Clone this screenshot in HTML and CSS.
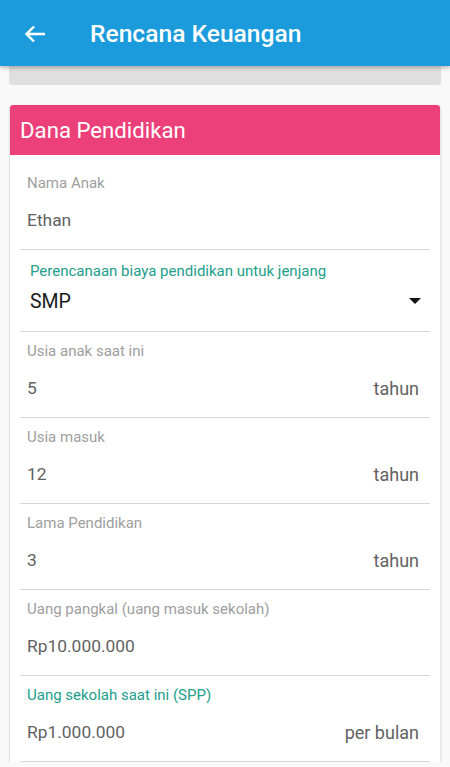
FILE: index.html
```html
<!DOCTYPE html>
<html lang="id">
<head>
    <meta charset="UTF-8">
    <meta name="viewport" content="width=device-width, initial-scale=1.0">
    <title>Rencana Keuangan</title>
    <link rel="stylesheet" href="styles.css">
</head>
<body>

<div class="app-bar">
    <span class="back-btn">
        <svg width="22" height="18" viewBox="0 0 22 18"><path d="M21 9H3M10 1.5L2.5 9 10 16.5" fill="none" stroke="#fff" stroke-width="2.4"/></svg>
    </span>
    <h1>Rencana Keuangan</h1>
</div>

<div class="top-strip"></div>

<div class="card">
    <div class="card-head">Dana Pendidikan</div>
    <div class="card-body">

        <!-- nama anak -->
        <div class="field first">
            <div class="label">Nama Anak</div>
            <div class="value-row"><span class="value">Ethan</span></div>
        </div>

        <!-- jenjang -->
        <div class="field select">
            <div class="label active">Perencanaan biaya pendidikan untuk jenjang</div>
            <div class="value-row">
                <span class="value dark">SMP</span>
                <span class="caret"></span>
            </div>
        </div>

        <div class="field">
            <div class="label">Usia anak saat ini</div>
            <div class="value-row"><span class="value">5</span><span class="unit">tahun</span></div>
        </div>

        <div class="field">
            <div class="label">Usia masuk</div>
            <div class="value-row"><span class="value">12</span><span class="unit">tahun</span></div>
        </div>

        <div class="field">
            <div class="label">Lama Pendidikan</div>
            <div class="value-row"><span class="value">3</span><span class="unit">tahun</span></div>
        </div>

        <div class="field">
            <div class="label">Uang pangkal (uang masuk sekolah)</div>
            <div class="value-row"><span class="value">Rp10.000.000</span></div>
        </div>

        <div class="field last">
            <div class="label active">Uang sekolah saat ini (SPP)</div>
            <div class="value-row"><span class="value">Rp1.000.000</span><span class="unit">per bulan</span></div>
        </div>

    </div>
</div>

</body>
</html>
```

FILE: styles.css
```css
body {
    font-family: Roboto, 'Noto Sans', sans-serif;
    margin: 0;
    background-color: #f9f9f9;
}

/* app bar */
.app-bar {
    height: 66px;
    background-color: #1b9bdc;
    display: flex;
    align-items: center;
    box-shadow: 0 2px 4px rgba(0, 0, 0, 0.25);
    position: relative;
    z-index: 2;
}
.back-btn {
    display: flex;
    width: 22px;
    margin-left: 24px;
    margin-top: 1px;
}
.app-bar h1 {
    margin: 0 0 0 44px;
    color: white;
    font-size: 24.6px;
    font-weight: 500;
}

.top-strip {
    height: 19px;
    margin: 0 9px;
    background-color: #e0e0e0;
    border-radius: 0 0 3px 3px;
}

/* card */
.card {
    margin: 20px 10px 0;
    background-color: white;
    border-radius: 3px 3px 0 0;
    box-shadow: 0 1px 3px rgba(0, 0, 0, 0.22);
}
.card-head {
    height: 50px;
    background-color: #ec407a;
    color: white;
    font-size: 22.2px;
    padding-left: 10px;
    line-height: 50px;
    border-radius: 3px 3px 0 0;
}
.card-body {
    padding: 0 10px;
}

.field {
    padding: 9px 11px 17px 7px;
    border-bottom: 1px solid #d6d6d6;
}
.field.first {
    padding-top: 18px;
}
.field.select {
    padding: 11px 10px 18px 10px;
}
.field.select .value-row {
    margin-top: 8px;
}
.label {
    font-size: 15px;
    line-height: 20px;
    color: #9e9e9e;
}
.label.active {
    color: #229e8b;
}
.value-row {
    margin-top: 15px;
    height: 24px;
    display: flex;
    align-items: center;
    justify-content: space-between;
}
.value {
    font-size: 17.4px;
    color: #626262;
}
.value.dark {
    font-size: 19.5px;
    color: #1a1a1a;
}
.unit {
    font-size: 18px;
    color: #626262;
}
.caret {
    width: 0;
    height: 0;
    border-left: 6px solid transparent;
    border-right: 6px solid transparent;
    border-top: 6px solid #111;
    margin-right: -1px;
}
```
